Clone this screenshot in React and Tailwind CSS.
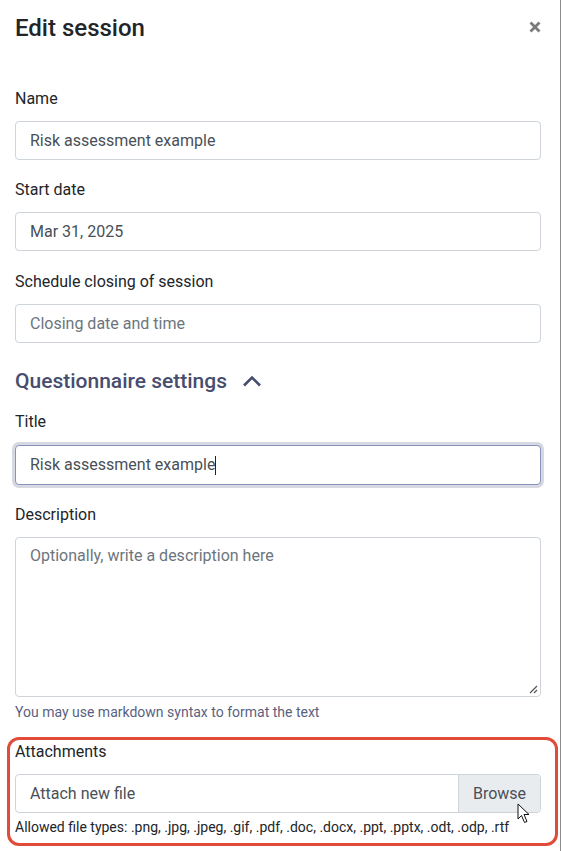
import React from "react";

const font = { fontFamily: "Roboto, 'Liberation Sans', sans-serif" };

function Label({ children, className = "" }) {
  return (
    <div className={`text-[16px] leading-6 text-[#212529] mb-[10px] ${className}`}>{children}</div>
  );
}

function Field({ children, placeholder = false, className = "" }) {
  return (
    <div
      className={`h-[39px] rounded-[4px] border border-[#ced4da] bg-white flex items-center pl-[14px] text-[16px] ${
        placeholder ? "text-[#6c757d]" : "text-[#495057]"
      } ${className}`}
    >
      {children}
    </div>
  );
}

export default function App() {
  return (
    <div style={font} className="w-[561px] h-[851px] bg-white overflow-hidden">
      <div className="w-[561px] h-[851px] border-r border-[#8c8c8c] bg-white">
        <div className="flex items-center justify-between pl-[15px] pr-[19px] pt-[14px]">
          <h1 className="text-[24px] leading-[29px] font-medium text-[#212529]">Edit session</h1>
          <svg width="12" height="12" viewBox="0 0 12 12" className="mr-0 mt-[-4px]">
            <path d="M1.5 1.5 L10.5 10.5 M10.5 1.5 L1.5 10.5" stroke="#7a7a7a" strokeWidth="2.8" strokeLinecap="butt" />
          </svg>
        </div>

        <div className="pl-[15px] pr-[19px]">
          <div className="mt-[44px]">
            <Label>Name</Label>
            <Field>Risk assessment example</Field>
          </div>
          <div className="mt-[18px]">
            <Label>Start date</Label>
            <Field>Mar 31, 2025</Field>
          </div>
          <div className="mt-[19px]">
            <Label>Schedule closing of session</Label>
            <Field placeholder>Closing date and time</Field>
          </div>

          <div className="mt-[26px] flex items-center gap-[15px]">
            <h2 className="text-[21px] leading-6 font-medium text-[#474d6e]">Questionnaire settings</h2>
            <svg width="20" height="14" viewBox="0 0 20 14">
              <polyline points="2,11.5 10,3.5 18,11.5" fill="none" stroke="#474d6e" strokeWidth="2.6" />
            </svg>
          </div>

          <div className="mt-[17px]">
            <Label className="mb-[11px]">Title</Label>
            <div className="h-[40px] rounded-[4px] border border-[#8a93bd] shadow-[0_0_0_3px_#d6d9e1] bg-white flex items-center pl-[14px] text-[16px] text-[#495057]">
              <span>Risk assessment example</span>
              <span className="inline-block w-px h-[19px] bg-[#222]" />
            </div>
          </div>

          <div className="mt-[18px]">
            <Label>Description</Label>
            <div className="relative h-[160px] rounded-[4px] border border-[#ced4da] bg-white pl-[14px] pt-[6px] text-[16px] leading-6 text-[#6c757d]">
              Optionally, write a description here
              <svg width="9" height="9" viewBox="0 0 9 9" className="absolute right-[2px] bottom-[2px]">
                <path d="M8 1 L1 8 M8 5 L5 8" stroke="#555" strokeWidth="1.2" />
              </svg>
            </div>
            <div className="mt-[5px] text-[14px] leading-5 text-[#5a5f80]">
              You may use markdown syntax to format the text
            </div>
          </div>

          <div className="mt-[15px] -ml-[8px] -mr-[17px] pl-[5px] pr-[14px] pb-[6px] border-[3px] border-[#e04b3a] rounded-[12px]">
            <Label>Attachments</Label>
            <div className="relative h-[39px] rounded-[4px] border border-[#ced4da] bg-white flex items-stretch text-[16px] text-[#495057]">
              <div className="flex-1 flex items-center pl-[14px]">Attach new file</div>
              <div className="w-[82px] bg-[#e9ecef] border-l border-[#ced4da] flex items-center justify-center rounded-r-[4px]">
                Browse
              </div>
              <svg width="14" height="21" viewBox="0 0 14 21" className="absolute left-[501px] top-[28px]">
                <path d="M1 1 L1 16 L4.5 12.5 L7.5 19.5 L10 18.5 L7 11.5 L12 11.5 Z" fill="#fff" stroke="#111" strokeWidth="1" strokeLinejoin="round" />
              </svg>
            </div>
            <div className="mt-[4px] text-[14px] leading-5 text-[#212529]">
              Allowed file types: .png, .jpg, .jpeg, .gif, .pdf, .doc, .docx, .ppt, .pptx, .odt, .odp, .rtf
            </div>
          </div>
        </div>
      </div>
    </div>
  );
}
